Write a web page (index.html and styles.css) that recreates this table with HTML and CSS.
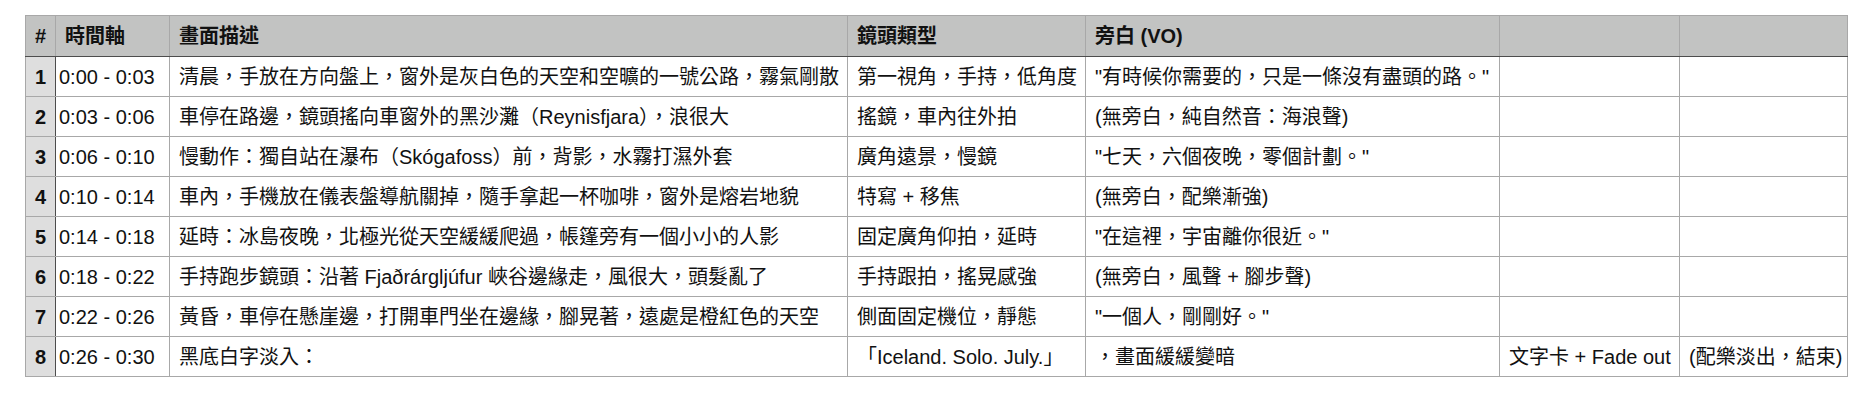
FILE: index.html
```html
<!DOCTYPE html>
<html lang="zh-Hant">
<head>
<meta charset="utf-8">
<title>分鏡表</title>
<link rel="stylesheet" href="styles.css">
</head>
<body>
<table class="sheet">
  <colgroup>
    <col class="c-num"><col class="c-time"><col class="c-desc"><col class="c-shot"><col class="c-vo"><col class="c-x1"><col class="c-x2">
  </colgroup>
  <thead>
    <tr>
      <th class="num">#</th>
      <th>時間軸</th>
      <th>畫面描述</th>
      <th>鏡頭類型</th>
      <th>旁白 (VO)</th>
      <th></th>
      <th></th>
    </tr>
  </thead>
  <tbody>
    <tr>
      <td class="num">1</td><td class="time">0:00 - 0:03</td>
      <td>清晨，手放在方向盤上，窗外是灰白色的天空和空曠的一號公路，霧氣剛散</td>
      <td>第一視角，手持，低角度</td>
      <td>"有時候你需要的，只是一條沒有盡頭的路。"</td><td></td><td></td>
    </tr>
    <tr>
      <td class="num">2</td><td class="time">0:03 - 0:06</td>
      <td>車停在路邊，鏡頭搖向車窗外的黑沙灘（Reynisfjara），浪很大</td>
      <td>搖鏡，車內往外拍</td>
      <td>(無旁白，純自然音：海浪聲)</td><td></td><td></td>
    </tr>
    <tr>
      <td class="num">3</td><td class="time">0:06 - 0:10</td>
      <td>慢動作：獨自站在瀑布（Skógafoss）前，背影，水霧打濕外套</td>
      <td>廣角遠景，慢鏡</td>
      <td>"七天，六個夜晚，零個計劃。"</td><td></td><td></td>
    </tr>
    <tr>
      <td class="num">4</td><td class="time">0:10 - 0:14</td>
      <td>車內，手機放在儀表盤導航關掉，隨手拿起一杯咖啡，窗外是熔岩地貌</td>
      <td>特寫 + 移焦</td>
      <td>(無旁白，配樂漸強)</td><td></td><td></td>
    </tr>
    <tr>
      <td class="num">5</td><td class="time">0:14 - 0:18</td>
      <td>延時：冰島夜晚，北極光從天空緩緩爬過，帳篷旁有一個小小的人影</td>
      <td>固定廣角仰拍，延時</td>
      <td>"在這裡，宇宙離你很近。"</td><td></td><td></td>
    </tr>
    <tr>
      <td class="num">6</td><td class="time">0:18 - 0:22</td>
      <td>手持跑步鏡頭：沿著 Fjaðrárgljúfur 峽谷邊緣走，風很大，頭髮亂了</td>
      <td>手持跟拍，搖晃感強</td>
      <td>(無旁白，風聲 + 腳步聲)</td><td></td><td></td>
    </tr>
    <tr>
      <td class="num">7</td><td class="time">0:22 - 0:26</td>
      <td>黃昏，車停在懸崖邊，打開車門坐在邊緣，腳晃著，遠處是橙紅色的天空</td>
      <td>側面固定機位，靜態</td>
      <td>"一個人，剛剛好。"</td><td></td><td></td>
    </tr>
    <tr>
      <td class="num">8</td><td class="time">0:26 - 0:30</td>
      <td>黑底白字淡入：</td>
      <td>「Iceland. Solo. July.」</td>
      <td>，畫面緩緩變暗</td>
      <td>文字卡 + Fade out</td>
      <td>(配樂淡出，結束)</td>
    </tr>
  </tbody>
</table>
</body>
</html>
```

FILE: styles.css
```css
html, body {
  margin: 0;
  background: #ffffff;
}

body {
  padding: 15px 0 0 25px;
  font-family: "Liberation Sans", "Noto Sans CJK TC", sans-serif;
  font-size: 20px;
  color: #111111;
}

.sheet {
  border-collapse: collapse;
  table-layout: fixed;
  width: 1823px;
  border: 1px solid #a8a8a8;
}

.c-num { width: 30px; }
.c-time { width: 114px; }
.c-desc { width: 678px; }
.c-shot { width: 238px; }
.c-vo { width: 414px; }
.c-x1 { width: 180px; }
.c-x2 { width: 168px; }

.sheet th,
.sheet td {
  border: 1px solid #a8a8a8;
  padding: 0 9px;
  text-align: left;
  white-space: nowrap;
  overflow: hidden;
  line-height: 24px;
}

.sheet thead th {
  background: #c2c3c2;
  font-weight: 700;
  height: 40px;
  border-bottom: 1px solid #4d4d4d;
}

.sheet tbody td {
  height: 39px;
}

.sheet .num {
  text-align: center;
  padding: 0;
  font-weight: 700;
}

.sheet tbody .num {
  background: #dedede;
  border-right: 1px solid #4d4d4d;
}

.sheet .time {
  padding-left: 3px;
}
```
